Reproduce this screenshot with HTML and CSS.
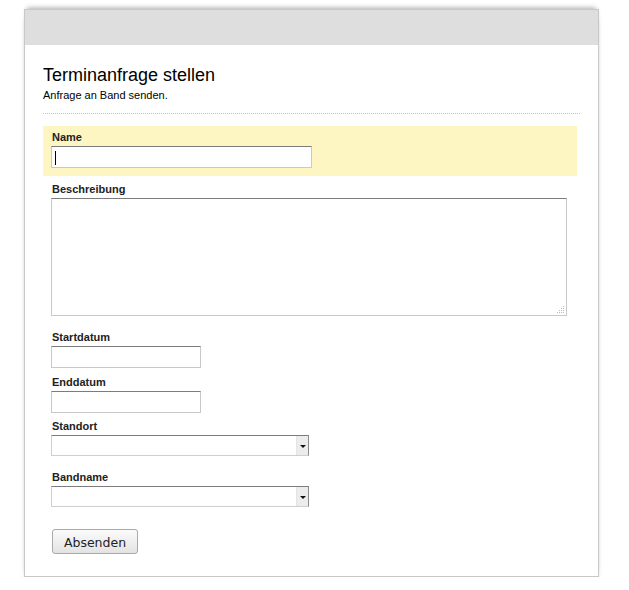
FILE: index.html
```html
<!DOCTYPE html>
<html lang="de">
<head>
<meta charset="utf-8">
<title>Terminanfrage stellen</title>
<link rel="stylesheet" href="styles.css">
</head>
<body>
<div class="panel">
  <div class="panel-head"></div>
  <div class="panel-body">
    <div class="intro">
      <h1 class="title">Terminanfrage stellen</h1>
      <p class="subtitle">Anfrage an Band senden.</p>
    </div>
    <form class="form">
      <div class="row row-focus">
        <label class="label" for="name">Name</label>
        <input class="input input-name" id="name" type="text">
        <span class="caret"></span>
      </div>
      <div class="row row-desc">
        <label class="label" for="desc">Beschreibung</label>
        <div class="textarea-wrap">
          <textarea class="textarea" id="desc"></textarea>
          <svg class="grip" width="8" height="8" viewBox="0 0 8 8">
            <rect x="6" y="0" width="1" height="1" fill="#bbb"/>
            <rect x="4" y="2" width="1" height="1" fill="#bbb"/>
            <rect x="6" y="2" width="1" height="1" fill="#bbb"/>
            <rect x="2" y="4" width="1" height="1" fill="#bbb"/>
            <rect x="4" y="4" width="1" height="1" fill="#bbb"/>
            <rect x="6" y="4" width="1" height="1" fill="#bbb"/>
            <rect x="0" y="6" width="1" height="1" fill="#bbb"/>
            <rect x="2" y="6" width="1" height="1" fill="#bbb"/>
            <rect x="4" y="6" width="1" height="1" fill="#bbb"/>
            <rect x="6" y="6" width="1" height="1" fill="#bbb"/>
          </svg>
        </div>
      </div>
      <div class="row row-start">
        <label class="label" for="start">Startdatum</label>
        <input class="input input-date" id="start" type="text">
      </div>
      <div class="row row-end">
        <label class="label" for="end">Enddatum</label>
        <input class="input input-date" id="end" type="text">
      </div>
      <div class="row row-loc">
        <label class="label" for="loc">Standort</label>
        <div class="select">
          <span class="select-value"></span>
          <span class="select-btn"><span class="select-arrow"></span></span>
        </div>
      </div>
      <div class="row row-band">
        <label class="label" for="band">Bandname</label>
        <div class="select">
          <span class="select-value"></span>
          <span class="select-btn"><span class="select-arrow"></span></span>
        </div>
      </div>
      <div class="actions">
        <button class="button" type="button">Absenden</button>
      </div>
    </form>
  </div>
</div>
</body>
</html>
```

FILE: styles.css
```css
html, body {
  margin: 0;
  padding: 0;
  background: #fff;
}

body {
  font-family: "Liberation Sans", Arial, sans-serif;
  color: #000;
}

.panel {
  width: 573px;
  margin: 9px 0 0 24px;
  border: 1px solid #c8c8c8;
  background: #fff;
  box-shadow: 0 -4px 5px -3px rgba(0, 0, 0, 0.35), 0 6px 6px -4px rgba(0, 0, 0, 0.55);
}

.panel-head {
  height: 35px;
  background: #dedede;
}

.panel-body {
  padding: 19px 18px 22px 18px;
}

.intro {
  border-bottom: 1px dotted #c4c4c4;
  padding-bottom: 11px;
  margin-bottom: 12px;
}

.title {
  margin: 0;
  font-size: 18px;
  line-height: 22px;
  font-weight: normal;
  color: #000;
}

.subtitle {
  margin: 2px 0 0 0;
  font-size: 11px;
  line-height: 14px;
  color: #000;
}

.form {
  display: flex;
  flex-direction: column;
  margin-right: 3px;
}

.row {
  display: flex;
  flex-direction: column;
  align-items: flex-start;
  padding: 0 8px;
  position: relative;
}

.row-focus {
  background: #fdf6c2;
  padding-top: 4px;
  padding-bottom: 8px;
}

.row-desc { padding-top: 6px; }
.row-start { padding-top: 14px; }
.row-end { padding-top: 7px; }
.row-loc { padding-top: 6px; }
.row-band { padding-top: 14px; }

.label {
  display: block;
  font-size: 11px;
  line-height: 14px;
  font-weight: bold;
  color: #222;
  margin: 0 0 2px 1px;
}

.input {
  box-sizing: border-box;
  height: 22px;
  margin: 0;
  padding: 2px 3px;
  border: 1px solid #c9c9c9;
  border-top-color: #7c7c7c;
  background: #fff;
  font: 12px "Liberation Sans", Arial, sans-serif;
  outline: none;
}

.input-name { width: 261px; }
.input-date { width: 150px; }

.caret {
  position: absolute;
  left: 12px;
  top: 25px;
  width: 1px;
  height: 14px;
  background: #000;
}

.textarea-wrap {
  position: relative;
  width: 516px;
  height: 118px;
}

.textarea {
  box-sizing: border-box;
  display: block;
  width: 516px;
  height: 118px;
  margin: 0;
  border: 1px solid #c9c9c9;
  border-top-color: #7c7c7c;
  resize: none;
  outline: none;
  font: 12px "Liberation Sans", Arial, sans-serif;
}

.grip {
  position: absolute;
  right: 2px;
  bottom: 2px;
}

.select {
  box-sizing: border-box;
  display: flex;
  width: 258px;
  height: 21px;
  border: 1px solid #cfcfcf;
  border-top-color: #7c7c7c;
  border-right-color: #8a8a8a;
  background: #fff;
}

.select-value {
  flex: 1;
}

.select-btn {
  box-sizing: border-box;
  width: 12px;
  display: flex;
  align-items: center;
  justify-content: center;
  background: #ececec;
  border-left: 1px solid #e4e4e4;
}

.select-arrow {
  width: 0;
  height: 0;
  border-left: 3px solid transparent;
  border-right: 3px solid transparent;
  border-top: 3px solid #111;
  margin-top: 2px;
}

.actions {
  padding: 22px 0 0 9px;
}

.button {
  box-sizing: border-box;
  width: 86px;
  height: 25px;
  padding: 1px 0 0 0;
  border: 1px solid #a9a9a9;
  border-radius: 3px;
  background: linear-gradient(#fbfbfb, #e3e3e3);
  font-family: "DejaVu Sans", Verdana, sans-serif;
  font-size: 12.5px;
  color: #222;
}
```
